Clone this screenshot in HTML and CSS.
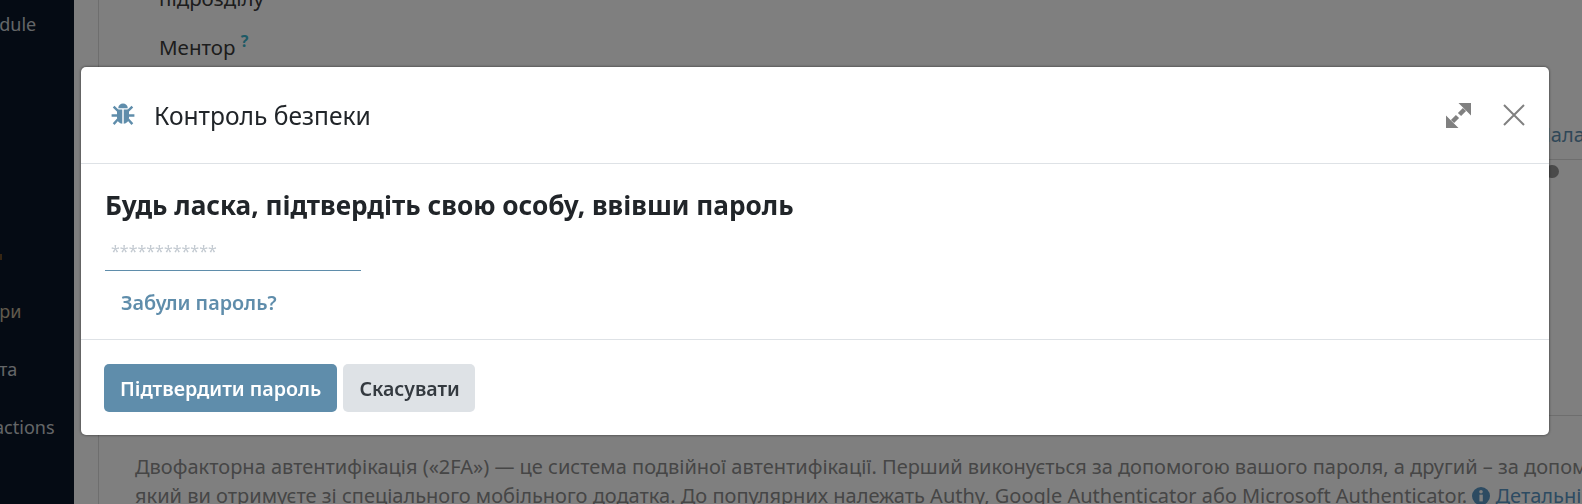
FILE: index.html
```html
<!DOCTYPE html>
<html lang="uk">
<head>
  <meta charset="UTF-8">
  <title>Контроль безпеки</title>
  <link rel="stylesheet" href="styles.css">
</head>
<body>
  <div class="page">
    <aside class="sidebar">
      <div class="side-item side-module">Module</div>
      <div class="side-mark"></div>
      <div class="side-item side-partners">Партнери</div>
      <div class="side-item side-data">Дата</div>
      <div class="side-item side-actions">Transactions</div>
    </aside>
    <main class="content">
      <div class="form-col">
        <div class="field-label field-first">підрозділу</div>
        <div class="field-label field-mentor">Ментор <sup class="help">?</sup></div>
      </div>
      <div class="right-link">Налаштування</div>
      <div class="rule-row"><span class="dot"></span></div>
      <div class="bottom-rule"></div>
      <p class="intro">Двофакторна автентифікація («2FA») — це система подвійної автентифікації. Перший виконується за допомогою вашого пароля, а другий – за допомогою коду,<br>який ви отримуєте зі спеціального мобільного додатка. До популярних належать Authy, Google Authenticator або Microsoft Authenticator. <span class="info">
        <svg class="info-icon" viewBox="0 0 16 16"><circle cx="8" cy="8" r="8" fill="currentColor"/><rect x="6.600" y="6.800" width="3" height="6" fill="#fff"/><circle cx="8" cy="4.200" r="1.600" fill="#fff"/></svg>
        Детальніше</span></p>
    </main>
  </div>

  <div class="backdrop"></div>

  <div class="modal-wrap">
    <div class="modal">
      <header class="modal-header">
        <svg class="bug" viewBox="0 0 20 20">
          <path d="M6 5.200C6.200 2.500 8 1.300 10 1.300s3.800 1.200 4 3.900z" fill="#5f8dab"/>
          <path d="M5 6.200h4.400v12C7 18 5 16 5 13zM10.600 6.200H15V13c0 3-2 5-4.400 5.200z" fill="#5f8dab"/>
          <path d="M2.200 3.800l3.400 3.400M17.800 3.800l-3.400 3.400M.5 11.200h5M19.500 11.200h-5M2.200 18.400l3.600-4M17.800 18.400l-3.600-4" stroke="#5f8dab" stroke-width="2" fill="none"/>
        </svg>
        <h4 class="modal-title">Контроль безпеки</h4>
        <button class="icon-btn expand-btn" aria-label="Розгорнути">
          <svg viewBox="0 0 25 25" width="25" height="25">
            <path d="M12.500 0H25v12.500z M0 25V12.500L12.500 25z" fill="#808080"/>
            <path d="M18.500 6.500l-5 5M6.500 18.500l5-5" stroke="#808080" stroke-width="4.500" fill="none"/>
          </svg>
        </button>
        <button class="icon-btn close-btn" aria-label="Закрити">
          <svg viewBox="0 0 22 22" width="22" height="22">
            <path d="M1 1l20 20M21 1L1 21" stroke="#808080" stroke-width="2" fill="none"/>
          </svg>
        </button>
      </header>
      <div class="modal-body">
        <h3 class="prompt">Будь ласка, підтвердіть свою особу, ввівши пароль</h3>
        <input class="password" type="password" placeholder="************">
        <a class="forgot" href="#">Забули пароль?</a>
      </div>
      <footer class="modal-footer">
        <button class="btn btn-primary">Підтвердити пароль</button>
        <button class="btn btn-secondary">Скасувати</button>
      </footer>
    </div>
  </div>
</body>
</html>
```

FILE: styles.css
```css
html, body {
  margin: 0;
  padding: 0;
  height: 100%;
  overflow: hidden;
}
body {
  font-family: "Noto Sans", "Open Sans", sans-serif;
  color: #212529;
  background: #fff;
}
.page {
  display: flex;
  height: 504px;
  overflow: hidden;
}
.sidebar {
  flex: 0 0 74px;
  background: #0a1628;
  color: #c8ccd0;
  font-size: 18px;
  overflow: hidden;
  white-space: nowrap;
}
.side-item {
  line-height: 24px;
}
.side-module {
  margin-top: 12px;
  margin-left: -28px;
}
.side-mark {
  width: 2px;
  height: 6px;
  margin-top: 218px;
  background: #6e4c26;
}
.side-partners {
  margin-top: 39px;
  margin-left: -64px;
  color: #c0b49a;
}
.side-data {
  margin-top: 34px;
  margin-left: -24px;
}
.side-actions {
  margin-top: 34px;
  margin-left: -52px;
}
.content {
  flex: 1;
  min-width: 0;
  margin-left: 24px;
  border-left: 1px solid #ddd;
  overflow: hidden;
}
.form-col {
  padding-left: 60px;
  margin-top: -15px;
}
.field-label {
  font-size: 20.500px;
  line-height: 26px;
  color: #3a3a3a;
}
.field-mentor {
  margin-top: 23px;
}
.help {
  color: #3cb4cc;
  font-size: 16px;
  font-weight: 700;
  line-height: 0;
}
.right-link {
  margin-top: 62px;
  margin-left: 1437px;
  font-size: 20px;
  line-height: 26px;
  white-space: nowrap;
  color: #5f8fb0;
}
.rule-row {
  display: flex;
  justify-content: flex-end;
  margin-top: 11px;
  border-top: 1px solid #ddd;
}
.dot {
  width: 14px;
  height: 13px;
  margin-top: 5px;
  margin-right: 23px;
  border-radius: 7px;
  background: #949494;
}
.bottom-rule {
  margin-top: 237px;
  border-top: 1px solid #ddd;
}
.intro {
  width: 1600px;
  margin: 37px 0 0 36px;
  font-size: 20px;
  line-height: 28.500px;
  white-space: nowrap;
  color: #8c8c8c;
}
.info {
  color: #5a96c4;
}
.info-icon {
  width: 18px;
  height: 18px;
  vertical-align: -2px;
}
.backdrop {
  position: fixed;
  inset: 0;
  background: rgba(0, 0, 0, 0.5);
}
.modal-wrap {
  position: fixed;
  inset: 0;
  padding: 67px 33px 0 81px;
}
.modal {
  background: #fff;
  border-radius: 5px;
  height: 368px;
  display: flex;
  flex-direction: column;
  box-shadow: 0 0 3px rgba(0, 0, 0, 0.6);
}
.modal-header {
  display: flex;
  align-items: center;
  box-sizing: border-box;
  height: 97px;
  padding: 0 24px 0 30px;
  border-bottom: 1px solid #dee2e6;
}
.bug {
  width: 24px;
  height: 24px;
  margin-right: 19px;
  margin-top: -2px;
}
.modal-title {
  flex: 1;
  margin: 0;
  font-size: 24.600px;
  font-weight: 400;
  color: #212529;
}
.icon-btn {
  display: flex;
  padding: 0;
  border: none;
  background: none;
}
.expand-btn {
  margin-right: 32px;
}
.modal-body {
  flex: 1;
  padding: 24px 24px 0;
}
.prompt {
  margin: 0;
  font-size: 26.200px;
  font-weight: 700;
  line-height: 34px;
}
.password {
  display: block;
  box-sizing: border-box;
  width: 256px;
  height: 39px;
  margin-top: 10px;
  padding: 0 6px;
  border: none;
  border-bottom: 1px solid #5f8dab;
  outline: none;
  font-family: inherit;
  font-size: 16px;
}
.password::placeholder {
  color: #c3cad1;
}
.forgot {
  display: inline-block;
  margin: 19px 0 0 16px;
  font-size: 19.800px;
  font-weight: 600;
  line-height: 26px;
  color: #5f8dab;
  text-decoration: none;
}
.modal-footer {
  display: flex;
  gap: 6px;
  flex: 0 0 96px;
  box-sizing: border-box;
  padding: 24px 23px 0;
  border-top: 1px solid #dee2e6;
}
.btn {
  height: 48px;
  padding: 0 16px;
  border: none;
  border-radius: 5px;
  font-family: inherit;
  font-size: 19.700px;
  font-weight: 600;
}
.btn-primary {
  background: #5f8dab;
  color: #fff;
}
.btn-secondary {
  padding: 0 15px 0 16px;
  font-size: 19.500px;
  background: #dee2e6;
  color: #343a40;
}
```
